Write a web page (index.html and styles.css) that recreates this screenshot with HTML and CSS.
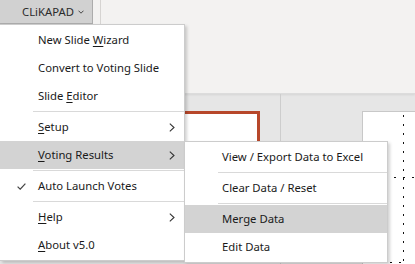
FILE: index.html
```html
<!DOCTYPE html>
<html lang="en">
<head>
    <meta charset="UTF-8">
    <title>CLiKAPAD menu</title>
    <link rel="stylesheet" href="styles.css">
</head>
<body>

    <!-- Ribbon with the add-in button -->
    <div class="ribbon">
        <div class="ribbon-group">
            <button class="addin-button">CLiKAPAD
                <svg class="caret" width="6" height="4" viewBox="0 0 6 4"><path d="M0.5 0.7 L3 3.2 L5.5 0.7" fill="none" stroke="#444" stroke-width="1"/></svg>
            </button>
        </div>
    </div>

    <!-- Slides area behind the menus -->
    <div class="workspace">
        <div class="thumbs">
            <div class="thumb"></div>
        </div>
        <div class="editor">
            <div class="slide">
                <div class="box-left"></div>
                <div class="box-right"></div>
            </div>
        </div>
    </div>

    <!-- Main dropdown -->
    <div class="menu main-menu">
        <div class="item">New Slide <u>W</u>izard</div>
        <div class="item">Convert to Voting Slide</div>
        <div class="item">Slide <u>E</u>ditor</div>
        <div class="sep"></div>
        <div class="item has-sub"><u>S</u>etup
            <svg class="chev" width="6" height="9" viewBox="0 0 6 9"><path d="M0.8 0.6 L5 4.5 L0.8 8.4" fill="none" stroke="#333" stroke-width="1.1"/></svg>
        </div>
        <div class="item has-sub hover"><u>V</u>oting Results
            <svg class="chev" width="6" height="9" viewBox="0 0 6 9"><path d="M0.8 0.6 L5 4.5 L0.8 8.4" fill="none" stroke="#333" stroke-width="1.1"/></svg>
        </div>
        <div class="sep"></div>
        <div class="item checked">
            <svg class="check" width="9" height="7" viewBox="0 0 9 7"><path d="M0.6 3.6 L3.2 6.2 L8.4 0.6" fill="none" stroke="#444" stroke-width="1.2"/></svg>
            Auto Launch Votes
        </div>
        <div class="sep"></div>
        <div class="item has-sub"><u>H</u>elp
            <svg class="chev" width="6" height="9" viewBox="0 0 6 9"><path d="M0.8 0.6 L5 4.5 L0.8 8.4" fill="none" stroke="#333" stroke-width="1.1"/></svg>
        </div>
        <div class="item"><u>A</u>bout v5.0</div>
    </div>

    <!-- Voting Results submenu -->
    <div class="menu sub-menu">
        <div class="item">View / Export Data to Excel</div>
        <div class="sep"></div>
        <div class="item">Clear Data / Reset</div>
        <div class="sep"></div>
        <div class="item hover">Merge Data</div>
        <div class="item">Edit Data</div>
    </div>

</body>
</html>
```

FILE: styles.css
```css
body {
    margin: 0;
    width: 415px;
    height: 264px;
    overflow: hidden;
    position: relative;
    font-family: "Noto Sans", "Open Sans", sans-serif;
    font-size: 11.3px;
    color: #1a1a1a;
    background-color: #e6e6e6;
}

.ribbon {
    height: 93px;
    background-color: #f3f2f1;
    border-bottom: 1px solid #dcdcdc;
    box-shadow: 0 1px 2px rgba(0, 0, 0, 0.08);
}

.ribbon-group {
    display: flex;
    width: 100px;
    height: 24px;
    border-right: 1px solid #d6d4d2;
}

.addin-button {
    width: 93px;
    height: 24px;
    padding: 0 0 1px 22px;
    display: flex;
    align-items: center;
    gap: 4px;
    font-family: inherit;
    font-size: 11.3px;
    font-weight: normal;
    color: #2b2b2b;
    background-color: #d1d1d1;
    border: 1px solid #acacac;
    border-left: none;
    border-top: none;
}

.caret {
    margin-top: 1px;
}

.workspace {
    display: flex;
    height: 170px;
}

.thumbs {
    width: 280px;
    border-right: 1px solid #cdcdcd;
    padding-top: 17px;
}

.thumb {
    margin-left: 40px;
    width: 214px;
    height: 120px;
    background-color: #fff;
    border: 3px solid #b7472a;
}

.editor {
    flex: 1;
    padding: 17px 0 0 81px;
}

.slide {
    height: 160px;
    background-color: #fff;
    border: 1px solid #c8c8c8;
    border-right: none;
    position: relative;
}

/* dotted placeholder outlines on the slide */
.box-left {
    position: absolute;
    left: 0;
    top: 3px;
    width: 41px;
    height: 148px;
    background:
        linear-gradient(#111 2px, transparent 2px) right top / 1px 9px repeat-y,
        linear-gradient(to right, #111 2px, transparent 2px) left bottom / 9px 1px repeat-x;
}

.box-right {
    position: absolute;
    left: 31px;
    top: 65px;
    right: 0;
    height: 1px;
    background: linear-gradient(to right, #111 2px, transparent 2px) left top / 9px 1px repeat-x;
}

/* dropdown menus */

.menu {
    position: absolute;
    background-color: #fff;
    border: 1px solid #cccccc;
    padding: 1px 0;
    box-shadow: 2px 2px 3px rgba(0, 0, 0, 0.18);
}

.main-menu {
    left: 0;
    top: 24px;
    width: 184px;
    border-left: none;
}

.sub-menu {
    left: 184px;
    top: 141px;
    width: 202px;
}

.item {
    position: relative;
    height: 28px;
    line-height: 28px;
    padding-left: 38px;
    white-space: nowrap;
}

.sub-menu .item {
    padding-left: 37px;
}

.item u {
    text-decoration-thickness: 1px;
    text-underline-offset: 2px;
}

.hover {
    background-color: #d3d3d3;
}

.sep {
    height: 1px;
    margin: 1px 0 1px 33px;
    background-color: #d9d9d9;
}

.chev {
    position: absolute;
    right: 9px;
    top: 10px;
}

.check {
    position: absolute;
    left: 17px;
    top: 11px;
}
```
